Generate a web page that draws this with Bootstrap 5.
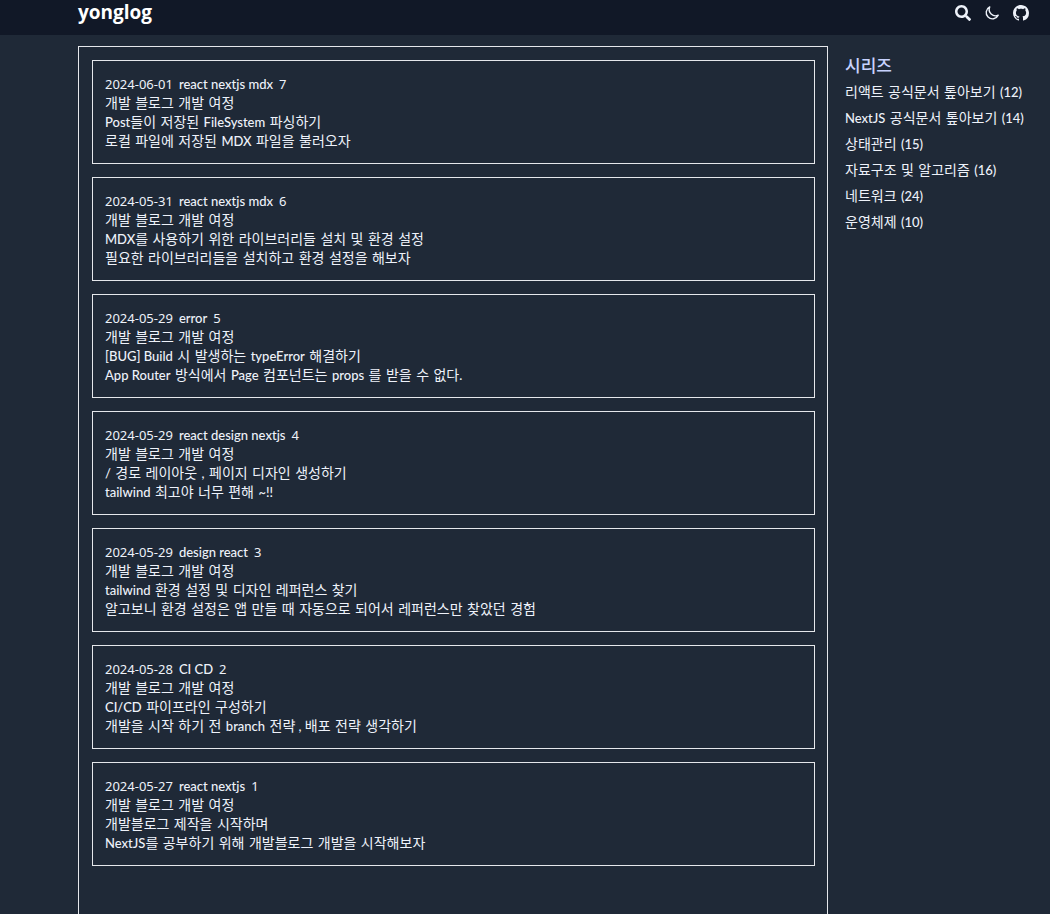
<!DOCTYPE html>
<html lang="ko">
<head>
<meta charset="utf-8">
<meta name="viewport" content="width=device-width, initial-scale=1">
<title>yonglog</title>
<link href="https://cdn.jsdelivr.net/npm/bootstrap@5.3.0/dist/css/bootstrap.min.css" rel="stylesheet">
<style>
  body { background: #1f2937; color: #eef2fa; font-family: "DejaVu Sans", "Noto Sans CJK KR", sans-serif; font-size: 14px; line-height: 19px; }
  a, a:hover { color: inherit; text-decoration: none; }
  .latin { font-family: Lato, "Noto Sans CJK KR", sans-serif; font-size: 13px; font-weight: 500; }
  .meta time, .meta .number { font-family: "Noto Sans", sans-serif; font-weight: 400; }
  .page-x { padding-left: 78px; padding-right: 21px; }
  .site-header { background: #111827; height: 35px; padding-bottom: 10px; }
  .site-name { font-family: "Open Sans", sans-serif; font-size: 19px; line-height: 25px; font-weight: 700; color: #fff; }
  .tools { gap: 13px; }
  .tools svg { display: block; width: 16px; height: 16px; }
  .tools button { color: inherit; }
  .content { padding-top: 11px; gap: 17px; min-height: calc(100vh - 35px); }
  .posts { border: 1px solid #e5e7eb; border-bottom: 0; padding: 13px 12px 13px 13px; gap: 13px; }
  .post { border: 1px solid #e5e7eb; padding: 14px 12px 12px; }
  .post > * { min-height: 19px; }
  .meta { gap: 6px; }
  .series { width: 184px; padding-top: 9px; }
  .series-title { font-size: 17px; line-height: 22px; font-weight: 500; color: #c7d2fe; margin-bottom: 6px; }
  .series ul { gap: 7px; }
  .series li { white-space: nowrap; }
</style>
</head>
<body>
<header class="site-header page-x d-flex align-items-center justify-content-between">
  <a class="site-name" href="#">yonglog</a>
  <div class="tools d-flex align-items-center">
    <button class="btn p-0 border-0" type="button" aria-label="검색">
      <svg viewBox="0 0 512 512" fill="currentColor"><path d="M505 442.700 405.300 343c-4.500-4.500-10.600-7-17-7H372c27.600-35.300 44-79.700 44-128C416 93.100 322.900 0 208 0S0 93.100 0 208s93.100 208 208 208c48.300 0 92.700-16.400 128-44v16.300c0 6.400 2.500 12.500 7 17l99.700 99.700c9.400 9.400 24.600 9.400 33.900 0l28.300-28.300c9.400-9.400 9.400-24.600.1-34zM208 336c-70.700 0-128-57.200-128-128 0-70.700 57.200-128 128-128 70.700 0 128 57.200 128 128 0 70.700-57.200 128-128 128z"/></svg>
    </button>
    <button class="btn p-0 border-0" type="button" aria-label="다크 모드">
      <svg viewBox="0 0 16 16" fill="none" stroke="currentColor" stroke-width="1.400" stroke-linejoin="round"><path d="M5.700 1.900a6.300 6.300 0 1 0 8.500 8.300A6.400 6.400 0 0 1 5.700 1.900z"/></svg>
    </button>
    <a href="#" aria-label="GitHub">
      <svg viewBox="0 0 16 16" fill="currentColor"><path d="M8 0C3.580 0 0 3.580 0 8c0 3.540 2.290 6.530 5.470 7.590.4.070.55-.17.55-.38 0-.19-.01-.82-.01-1.490-2.010.37-2.530-.49-2.690-.94-.09-.23-.48-.94-.82-1.130-.28-.15-.68-.52-.01-.53.63-.01 1.080.58 1.230.82.72 1.210 1.870.87 2.330.66.07-.52.28-.87.51-1.070-1.780-.2-3.640-.89-3.640-3.950 0-.87.31-1.590.82-2.150-.08-.2-.36-1.020.08-2.120 0 0 .67-.21 2.200.82.64-.18 1.320-.27 2-.27s1.360.09 2 .27c1.530-1.040 2.200-.82 2.200-.82.44 1.100.16 1.920.08 2.120.51.56.82 1.270.82 2.150 0 3.070-1.870 3.750-3.650 3.950.29.25.54.73.54 1.480 0 1.070-.01 1.930-.01 2.200 0 .21.15.46.55.38A8.010 8.010 0 0 0 16 8c0-4.420-3.580-8-8-8z"/></svg>
    </a>
  </div>
</header>
<div class="content page-x d-flex">
  <main class="posts d-flex flex-column flex-grow-1">
    <article class="post">
      <div class="meta latin d-flex"><time>2024-06-01</time><span>react nextjs mdx</span><span class="number">7</span></div>
      <div>개발 블로그 개발 여정</div>
      <div><a href="#"><span class="latin">Post</span>들이 저장된 <span class="latin">FileSystem</span> 파싱하기</a></div>
      <div>로컬 파일에 저장된 <span class="latin">MDX</span> 파일을 불러오자</div>
    </article>
    <article class="post">
      <div class="meta latin d-flex"><time>2024-05-31</time><span>react nextjs mdx</span><span class="number">6</span></div>
      <div>개발 블로그 개발 여정</div>
      <div><a href="#"><span class="latin">MDX</span>를 사용하기 위한 라이브러리들 설치 및 환경 설정</a></div>
      <div>필요한 라이브러리들을 설치하고 환경 설정을 해보자</div>
    </article>
    <article class="post">
      <div class="meta latin d-flex"><time>2024-05-29</time><span>error</span><span class="number">5</span></div>
      <div>개발 블로그 개발 여정</div>
      <div><a href="#"><span class="latin">[BUG] Build</span> 시 발생하는 <span class="latin">typeError</span> 해결하기</a></div>
      <div><span class="latin">App Router</span> 방식에서 <span class="latin">Page</span> 컴포넌트는 <span class="latin">props</span> 를 받을 수 없다<span class="latin">.</span></div>
    </article>
    <article class="post">
      <div class="meta latin d-flex"><time>2024-05-29</time><span>react design nextjs</span><span class="number">4</span></div>
      <div>개발 블로그 개발 여정</div>
      <div><a href="#"><span class="latin">/</span> 경로 레이아웃 <span class="latin">,</span> 페이지 디자인 생성하기</a></div>
      <div><span class="latin">tailwind</span> 최고야 너무 편해 <span class="latin">~!!</span></div>
    </article>
    <article class="post">
      <div class="meta latin d-flex"><time>2024-05-29</time><span>design react</span><span class="number">3</span></div>
      <div>개발 블로그 개발 여정</div>
      <div><a href="#"><span class="latin">tailwind</span> 환경 설정 및 디자인 레퍼런스 찾기</a></div>
      <div>알고보니 환경 설정은 앱 만들 때 자동으로 되어서 레퍼런스만 찾았던 경험</div>
    </article>
    <article class="post">
      <div class="meta latin d-flex"><time>2024-05-28</time><span>CI CD</span><span class="number">2</span></div>
      <div>개발 블로그 개발 여정</div>
      <div><a href="#"><span class="latin">CI/CD</span> 파이프라인 구성하기</a></div>
      <div>개발을 시작 하기 전 <span class="latin">branch</span> 전략<span class="latin"> , </span>배포 전략 생각하기</div>
    </article>
    <article class="post">
      <div class="meta latin d-flex"><time>2024-05-27</time><span>react nextjs</span><span class="number">1</span></div>
      <div>개발 블로그 개발 여정</div>
      <div><a href="#">개발블로그 제작을 시작하며</a></div>
      <div><span class="latin">NextJS</span>를 공부하기 위해 개발블로그 개발을 시작해보자</div>
    </article>
  </main>
  <aside class="series flex-shrink-0">
    <h2 class="series-title">시리즈</h2>
    <ul class="list-unstyled d-flex flex-column mb-0">
      <li><a href="#">리액트 공식문서 톺아보기 <span class="latin">(12)</span></a></li>
      <li><a href="#"><span class="latin">NextJS</span> 공식문서 톺아보기 <span class="latin">(14)</span></a></li>
      <li><a href="#">상태관리 <span class="latin">(15)</span></a></li>
      <li><a href="#">자료구조 및 알고리즘 <span class="latin">(16)</span></a></li>
      <li><a href="#">네트워크 <span class="latin">(24)</span></a></li>
      <li><a href="#">운영체제 <span class="latin">(10)</span></a></li>
    </ul>
  </aside>
</div>
<script src="https://cdn.jsdelivr.net/npm/bootstrap@5.3.0/dist/js/bootstrap.bundle.min.js"></script>
</body>
</html>
